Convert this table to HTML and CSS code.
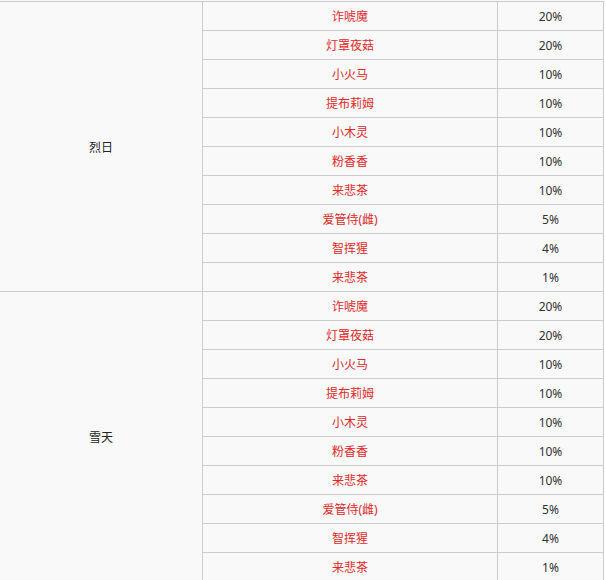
FILE: index.html
```html
<!DOCTYPE html>
<html lang="zh">
<head>
<meta charset="utf-8">
<link rel="stylesheet" href="styles.css">
</head>
<body>
<div class="wrap">
  <div class="grid">
    <div class="group">烈日</div>
    <div class="name">诈唬魔</div><div class="pct">20%</div>
    <div class="name">灯罩夜菇</div><div class="pct">20%</div>
    <div class="name">小火马</div><div class="pct">10%</div>
    <div class="name">提布莉姆</div><div class="pct">10%</div>
    <div class="name">小木灵</div><div class="pct">10%</div>
    <div class="name">粉香香</div><div class="pct">10%</div>
    <div class="name">来悲茶</div><div class="pct">10%</div>
    <div class="name">爱管侍(雌)</div><div class="pct">5%</div>
    <div class="name">智挥猩</div><div class="pct">4%</div>
    <div class="name">来悲茶</div><div class="pct">1%</div>
    <div class="group">雪天</div>
    <div class="name">诈唬魔</div><div class="pct">20%</div>
    <div class="name">灯罩夜菇</div><div class="pct">20%</div>
    <div class="name">小火马</div><div class="pct">10%</div>
    <div class="name">提布莉姆</div><div class="pct">10%</div>
    <div class="name">小木灵</div><div class="pct">10%</div>
    <div class="name">粉香香</div><div class="pct">10%</div>
    <div class="name">来悲茶</div><div class="pct">10%</div>
    <div class="name">爱管侍(雌)</div><div class="pct">5%</div>
    <div class="name">智挥猩</div><div class="pct">4%</div>
    <div class="name">来悲茶</div><div class="pct">1%</div>
  </div>
</div>
</body>
</html>
```
FILE: styles.css
```css
html, body {
  margin: 0;
  padding: 0;
  background: #ffffff;
}
body {
  font-family: "Noto Sans", "Noto Sans CJK SC", sans-serif;
  font-size: 12px;
  color: #333333;
}
.wrap {
  width: 604px;
  padding-top: 1px;
  background: #f9f9f9;
}
.grid {
  display: grid;
  grid-template-columns: 203px 295px 106px;
  grid-auto-rows: 29px;
  border-top: 1px solid #cccccc;
  background: #f9f9f9;
}
.grid > div {
  box-sizing: border-box;
  border-right: 1px solid #cccccc;
  border-bottom: 1px solid #cccccc;
  padding-top: 2px;
  display: flex;
  align-items: center;
  justify-content: center;
  line-height: 1;
}
.group {
  grid-column: 1;
  grid-row: span 10;
  color: #222222;
}
.name {
  grid-column: 2;
  color: #dd2a2a;
}
.pct {
  grid-column: 3;
  color: #333333;
}
```
